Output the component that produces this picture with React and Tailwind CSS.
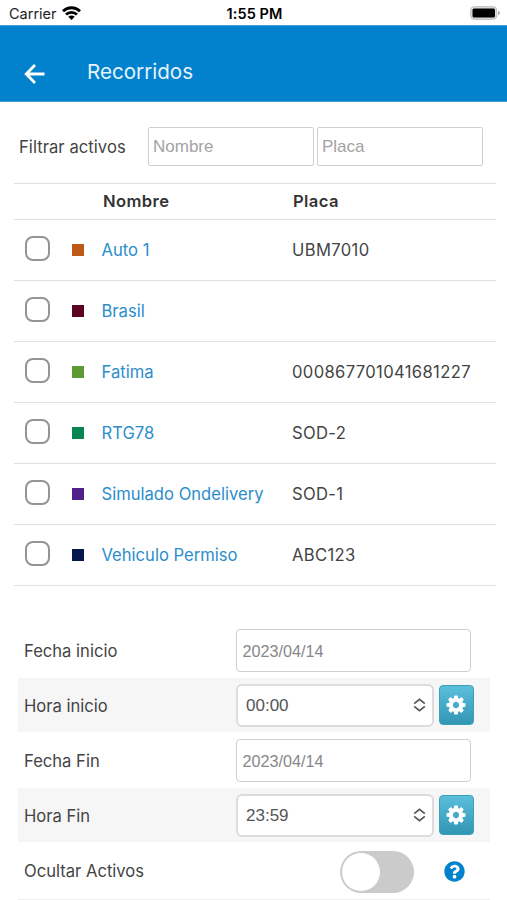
import { useState } from 'react';
import { FaQuestionCircle } from 'react-icons/fa';

const ASSETS = [
    { name: 'Auto 1', plate: 'UBM7010', color: 'bg-[#bd5917]' },
    { name: 'Brasil', plate: '', color: 'bg-[#5c0422]' },
    { name: 'Fatima', plate: '000867701041681227', color: 'bg-[#5d9a32]' },
    { name: 'RTG78', plate: 'SOD-2', color: 'bg-[#078652]' },
    { name: 'Simulado Ondelivery', plate: 'SOD-1', color: 'bg-[#51218a]' },
    { name: 'Vehiculo Permiso', plate: 'ABC123', color: 'bg-[#04184a]' },
];

function StatusBar() {
    return (
        <div className="h-[25px] grid grid-cols-3 items-center pl-[9px] pr-[7px] pt-[3px] text-black">
            <div className="flex items-center gap-[5px] text-[14.500px] leading-none text-[#222]">
                <span>Carrier</span>
                <svg className="w-[19px] h-[14px] -mt-[2px]" viewBox="0 0 19 14" fill="none" stroke="#000" strokeWidth="2.800">
                    <path d="M1 5.200a12.200 12.200 0 0 1 17 0" />
                    <path d="M4 8.600a7.900 7.900 0 0 1 11 0" />
                    <path d="M9.500 13.900L6.300 10.700a4.600 4.600 0 0 1 6.400 0z" fill="#000" stroke="none" />
                </svg>
            </div>
            <div className="text-center text-[14.500px] leading-none font-semibold whitespace-nowrap tracking-[0.1px]">1:55 PM</div>
            <div className="flex justify-end">
                <svg className="w-[30px] h-[14px] -mt-[2px]" viewBox="0 0 30 14">
                    <rect x="0.700" y="0.700" width="26" height="12.600" rx="3.500" fill="#ddd" stroke="#bbb" strokeWidth="1" />
                    <rect x="2.500" y="2.500" width="22.500" height="9" rx="1.500" fill="#000" />
                    <path d="M28 4.800q2 0.700 2 2.200t-2 2.200z" fill="#aaa" />
                </svg>
            </div>
        </div>
    );
}

function Header() {
    return (
        <header className="h-[77px] bg-[#0281cc] border-y border-[#3fa0da] flex items-center pl-[24px] pt-[16px] text-white">
            <svg className="w-[22px] h-[22px] mt-[4px]" viewBox="0 0 22 22" fill="none" stroke="currentColor" strokeWidth="2.800">
                <path d="M20.500 11H2.500M11 2L2.200 11l8.800 9" />
            </svg>
            <h1 className="ml-[41px] text-[20.600px] leading-7 text-[#e4f4fd]">Recorridos</h1>
        </header>
    );
}

function CogIcon() {
    return (
        <svg className="w-[22px] h-[22px] mr-[1px]" viewBox="0 0 1792 1792" fill="#fff">
            <path d="M1152 896q0-106-75-181t-181-75-181 75-75 181 75 181 181 75 181-75 75-181zm512-109v222q0 12-8 23t-20 13l-185 28q-19 54-39 91 35 50 107 138 10 12 10 25t-9 23q-27 37-99 108t-94 71q-12 0-26-9l-138-108q-44 23-91 38-16 136-29 186-7 28-36 28h-222q-14 0-24.500-8.500t-11.500-21.500l-28-184q-49-16-90-37l-141 107q-10 9-25 9-14 0-25-11-126-114-165-168-7-10-7-23 0-12 8-23 15-21 51-66.500t54-70.500q-27-50-41-99l-183-27q-13-2-21-12.500t-8-23.500v-222q0-12 8-23t19-13l186-28q14-46 39-92-40-57-107-138-10-12-10-24 0-10 9-23 26-36 98.500-107.500t94.500-71.500q13 0 26 10l138 107q44-23 91-38 16-136 29-186 7-28 36-28h222q14 0 24.500 8.500t11.500 21.500l28 184q49 16 90 37l142-107q9-9 24-9 13 0 25 10 129 119 165 170 7 8 7 22 0 12-8 23-15 21-51 66.500t-54 70.500q26 50 41 98l183 28q13 2 21 12.500t8 23.500z" />
        </svg>
    );
}

function DateRow({ label, value }) {
    return (
        <div className="h-[55px] flex items-center pl-[6px]">
            <span className="w-[212px] pt-px">{label}</span>
            <input
                className="w-[235px] h-[43px] border-[1.500px] border-[#cfcfcf] rounded-[4px] px-[5.500px] pt-[2px] bg-white text-[16.200px] text-[#888] font-['Liberation_Sans',sans-serif] outline-none"
                defaultValue={value}
            />
        </div>
    );
}

function TimeRow({ label, value }) {
    return (
        <div className="h-[54px] mb-px flex items-center pl-[6px] bg-[#f6f6f6]">
            <span className="w-[212px] pt-[2px]">{label}</span>
            <button className="w-[198px] h-[43px] border-2 border-[#dcdcdc] rounded-[6px] pl-[8px] pr-[6px] bg-white flex items-center justify-between text-[#555] font-['Liberation_Sans',sans-serif] text-[17px]">
                <span className="pt-[2px]">{value}</span>
                <svg className="w-[13px] h-[14px]" viewBox="0 0 13 14" fill="none" stroke="#555" strokeWidth="1.700">
                    <path d="M1.200 5.600L6.500 1.300l5.300 4.300M1.200 8.400l5.300 4.300 5.300-4.300" />
                </svg>
            </button>
            <button className="ml-[5px] w-[35px] h-[40px] mb-[1px] rounded-[4px] border border-[#3a9fbb] bg-linear-to-b from-[#5bbfdc] to-[#3196b4] flex items-center justify-center">
                <CogIcon />
            </button>
        </div>
    );
}

export default function App() {
    const [selected, setSelected] = useState([]);
    const [hidden, setHidden] = useState(false);

    const toggle = (name) => {
        setSelected(selected.includes(name) ? selected.filter((n) => n !== name) : [...selected, name]);
    };

    return (
        <div className="w-[507px] h-[900px] overflow-hidden bg-white font-['Inter',sans-serif] text-[16.600px] text-[#444]">
            <StatusBar />
            <Header />

            {/* Filters */}
            <div className="flex items-center pl-[19px] pt-[25px] pb-[17px]">
                <span className="w-[129px] pt-px tracking-[0.050px]">Filtrar activos</span>
                <input className="w-[166px] h-[39px] border-[1.500px] border-[#cfcfcf] rounded-[2px] px-[4px] text-[17px] placeholder-[#a3a3a3] font-['Liberation_Sans',sans-serif] outline-none" placeholder="Nombre" />
                <input className="ml-[3px] w-[166px] h-[39px] border-[1.500px] border-[#cfcfcf] rounded-[2px] px-[4px] text-[17px] placeholder-[#a3a3a3] font-['Liberation_Sans',sans-serif] outline-none" placeholder="Placa" />
            </div>

            {/* Assets */}
            <div className="ml-[14px] w-[482px] border-t border-[#dfdfdf]">
                <div className="h-[36px] flex items-center border-b border-[#dfdfdf] font-semibold text-[#333] tracking-[0.400px]">
                    <span className="ml-[89px] w-[190px]">Nombre</span>
                    <span>Placa</span>
                </div>
                {ASSETS.map((asset) => (
                    <div key={asset.name} className="h-[61px] flex items-center border-b border-[#dfdfdf]">
                        <input
                            type="checkbox"
                            className="appearance-none ml-[11px] mb-[4px] w-[25px] h-[25px] border-2 border-[#949494] rounded-[8px] checked:bg-[#0281cc]"
                            checked={selected.includes(asset.name)}
                            onChange={() => toggle(asset.name)}
                        />
                        <span className={`ml-[22px] w-[12px] h-[12px] mb-[1px] ${asset.color}`} />
                        <a className="ml-[17.500px] w-[190.500px] mt-[1px] text-[#2c8dcb] whitespace-nowrap">{asset.name}</a>
                        <span className="mt-[1px] tracking-[0.350px]">{asset.plate}</span>
                    </div>
                ))}
            </div>

            {/* Date range */}
            <div className="ml-[18px] mt-[37px] w-[472px]">
                <DateRow label="Fecha inicio" value="2023/04/14" />
                <TimeRow label="Hora inicio" value="00:00" />
                <DateRow label="Fecha Fin" value="2023/04/14" />
                <TimeRow label="Hora Fin" value="23:59" />
                <div className="h-[57px] flex items-center pl-[6px] pt-px border-b border-[#eee]">
                    <span className="w-[316px]">Ocultar Activos</span>
                    <button
                        className={`w-[74px] h-[42px] rounded-full p-[2px] flex ${hidden ? 'bg-[#0281cc] justify-end' : 'bg-[#cbcbcb]'}`}
                        onClick={() => setHidden(!hidden)}
                    >
                        <span className="w-[38px] h-[38px] rounded-full bg-white" />
                    </button>
                    <FaQuestionCircle className="ml-[30px] w-[21px] h-[21px] text-[#0281cc]" />
                </div>
            </div>
        </div>
    );
}
